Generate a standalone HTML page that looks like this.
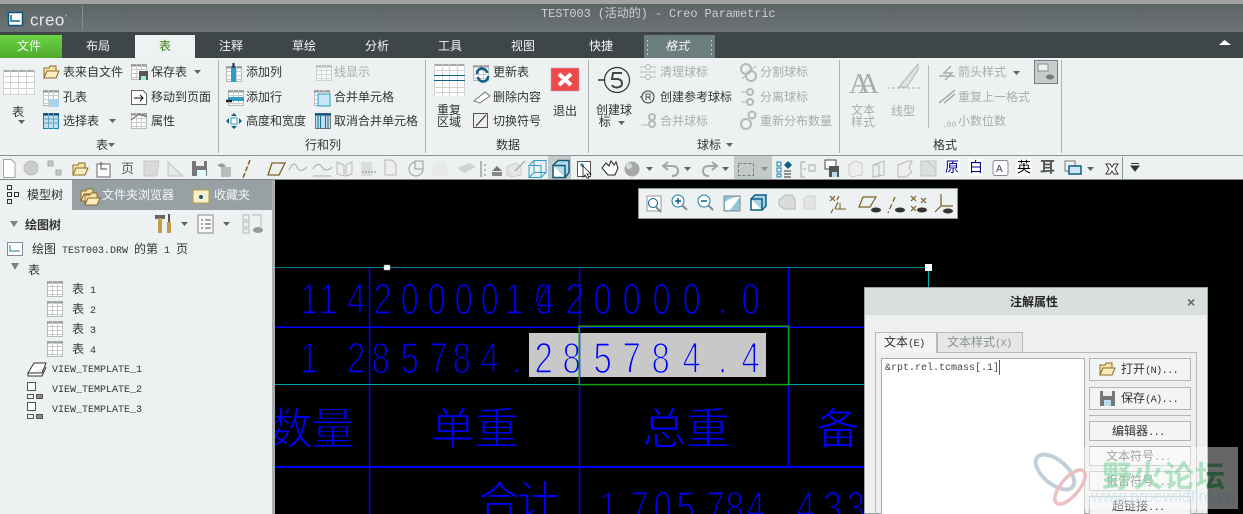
<!DOCTYPE html>
<html><head><meta charset="utf-8">
<style>
html,body{margin:0;padding:0;background:#000}
#p{position:relative;width:1243px;height:514px;overflow:hidden;background:#000;font:12px "Liberation Sans","WenQuanYi Zen Hei","Noto Sans CJK SC",sans-serif;color:#333}
#p div{position:absolute}
.t{position:absolute;white-space:nowrap;line-height:14px;font-family:"WenQuanYi Zen Hei","Noto Sans CJK SC",sans-serif;font-size:12px}
.g{color:#a9adae}
.w{color:#f4f6f6}
.m{font-family:"Liberation Mono","WenQuanYi Zen Hei",monospace}
.l{font:normal 10.5px "Liberation Mono",monospace;letter-spacing:-.8px}
.l2{font:normal 10px "Liberation Mono",monospace}
svg{position:absolute;left:0;top:0}
.btn{background:#f3f4f4;border:1px solid #b3b6b7;box-sizing:border-box}
</style></head><body><div id="p">

<!-- canvas -->
<svg width="1243" height="514" style="font-family:'Liberation Sans','WenQuanYi Zen Hei','Noto Sans CJK SC',sans-serif">
<rect x="529" y="333" width="237" height="44" fill="#c8c8c8"/>
<g transform="scale(.75 1)" font-size="44" fill="#0000ff" style="paint-order:fill stroke">
<text stroke="#000" stroke-width="1.600" y="314" x="400 425.300 462.700 498 534 570 606 640.700 673.300 712.700 714.700 754 791.300 830 870 910 957.300 988.700">1142000010420000.0</text>
<text stroke="#000" stroke-width="1.600" y="373" x="400 462.700 495.300 534 572.700 603.300 640.700 682.700">1285784.</text>
<text stroke="#c8c8c8" stroke-width="1.600" y="373" x="712.700 750 791.300 830 868.700 910 957.300 988.700">285784.4</text>
<text stroke="#000" stroke-width="1.600" y="522" x="798.700 840.700 871.300 902 942 967.300 995.300 1062 1098 1128.700">1705784433</text>
</g>
<g fill="#0000ff" font-size="44" stroke="#000" stroke-width="1.100" style="paint-order:fill stroke;font-family:'WenQuanYi Zen Hei','Noto Sans CJK SC',sans-serif">
<text x="268" y="444">数</text><text x="311" y="444">量</text><text x="431" y="444">单</text><text x="475" y="444">重</text><text x="642" y="444">总</text><text x="686" y="444">重</text><text x="816" y="444">备</text>
<text x="478" y="516" font-size="42">合</text><text x="517" y="516" font-size="42">计</text>
</g>
<g fill="#0000ff">
<rect x="275" y="326.500" width="590" height="1.500"/><rect x="275" y="466" width="590" height="2"/>
<rect x="368.800" y="268" width="1.500" height="246"/><rect x="578.800" y="268" width="1.500" height="246"/><rect x="787.800" y="268" width="1.500" height="198"/>
</g>
<rect x="275" y="267" width="654" height="1" fill="#00829a" shape-rendering="crispEdges"/><rect x="275" y="384" width="590" height="1" fill="#00a8b0" shape-rendering="crispEdges"/>
<rect x="928" y="268" width="1" height="19" fill="#00b0b0" shape-rendering="crispEdges"/>
<rect x="579.200" y="326.200" width="209.400" height="58.400" fill="none" stroke="#0aa50a" stroke-width="1.500"/>
<rect x="384" y="265" width="6" height="5" fill="#fff" stroke="#aaa" stroke-width=".5"/>
<rect x="925" y="264" width="7" height="7" fill="#fff"/>
</svg>

<div style="left:0;top:0;width:1243px;height:4px;background:#a2a2a0"></div>
<div style="left:0;top:4px;width:1243px;height:28px;background:linear-gradient(#5e6567,#6c7374)"></div>
<div style="left:0;top:32px;width:1243px;height:26px;background:#3e4648"></div>
<div style="left:0;top:35px;width:62px;height:23px;background:linear-gradient(#6bd544,#4fa92d)"></div>
<div style="left:135px;top:35px;width:60px;height:23px;background:#eef2f2"></div>
<div style="left:644px;top:35px;width:71px;height:23px;background:#6c7d7f"></div>
<div style="left:0;top:58px;width:1243px;height:97px;background:#edf1f2"></div>
<div style="left:0;top:155px;width:1243px;height:1px;background:#8d9495"></div>
<div style="left:0;top:156px;width:1243px;height:23px;background:#edf1f2"></div>
<div style="left:0;top:179px;width:1243px;height:1px;background:#7f8788"></div>
<div style="left:0;top:180px;width:272px;height:334px;background:#edf1f2"></div>
<div style="left:72px;top:180px;width:200px;height:30px;background:#97a1a3"></div>
<div style="left:272px;top:180px;width:3px;height:334px;background:#a9afb0"></div>
<div style="left:548px;top:156px;width:23px;height:23px;background:#c3c8c9"></div>
<div style="left:734px;top:156px;width:24px;height:23px;background:#c3c8c9"></div>
<div style="left:758px;top:156px;width:14px;height:23px;background:#c3c8c9"></div>
<div style="left:1034px;top:60px;width:24px;height:24px;background:#c7cbcc;border:1px solid #777e80;box-sizing:border-box"></div>
<div style="left:945px;top:159px;width:15px;height:17px;background:#fff"></div>
<div style="left:968px;top:159px;width:15px;height:17px;background:#fff"></div>
<div style="left:1016px;top:159px;width:16px;height:17px;background:#fff"></div>

<!-- floating toolbar -->
<div style="left:638px;top:188px;width:320px;height:31px;background:#edf1f2;border:1px solid #8d9697;box-sizing:border-box"></div>

<!-- dialog -->
<div style="left:864px;top:287px;width:344px;height:227px;background:#eeeff0;border:1px solid #9ea3a4;box-sizing:border-box"></div>
<div style="left:865px;top:288px;width:342px;height:27px;background:#d9dedf"></div>
<div style="left:875px;top:332px;width:62px;height:21px;background:#f2f3f3;border:1px solid #b7babb;border-bottom:0;box-sizing:border-box;z-index:1"></div>
<div style="left:937px;top:332px;width:86px;height:20px;background:#e4e6e7;border:1px solid #b7babb;border-bottom:0;box-sizing:border-box"></div>
<div style="left:875px;top:352px;width:322px;height:162px;border:1px solid #b7babb;border-bottom:0;box-sizing:border-box"></div>
<div style="left:881px;top:358px;width:204px;height:156px;background:#fff;border:1px solid #a8acad;border-bottom:0;box-sizing:border-box"></div>
<div class="btn" style="left:1089px;top:358px;width:102px;height:23px"></div>
<div class="btn" style="left:1089px;top:387px;width:102px;height:23px"></div>
<div style="left:1089px;top:415px;width:102px;height:1px;background:#b3b6b7"></div>
<div class="btn" style="left:1089px;top:421px;width:102px;height:20px"></div>
<div class="btn" style="left:1089px;top:446px;width:102px;height:20px"></div>
<div class="btn" style="left:1089px;top:471px;width:102px;height:20px"></div>
<div class="btn" style="left:1089px;top:496px;width:102px;height:20px"></div>
<div style="left:999px;top:360px;width:1px;height:15px;background:#2a66b0"></div>

<!-- tabs -->
<span class="t w" style="left:17px;top:39px">文件</span>
<span class="t w" style="left:86px;top:39px">布局</span>
<span class="t" style="left:159px;top:39px;color:#3a7d12">表</span>
<span class="t w" style="left:219px;top:39px">注释</span>
<span class="t w" style="left:292px;top:39px">草绘</span>
<span class="t w" style="left:365px;top:39px">分析</span>
<span class="t w" style="left:438px;top:39px">工具</span>
<span class="t w" style="left:511px;top:39px">视图</span>
<span class="t w" style="left:589px;top:39px">快捷</span>
<span class="t w" style="left:665px;top:39px;font-style:italic">格式</span>
<span class="t m" style="left:541px;top:7px;color:#ccd0d0;font-size:12px;letter-spacing:-.1px">TEST003 (活动的) - Creo Parametric</span>
<span class="t" style="left:30px;top:9px;color:#e6e9e9;font:17px/18px 'Liberation Sans',sans-serif;letter-spacing:.4px">creo<sup style="font-size:6px">°</sup></span>

<!-- ribbon text -->
<span class="t" style="left:63px;top:65px">表来自文件</span>
<span class="t" style="left:63px;top:90px">孔表</span>
<span class="t" style="left:63px;top:114px">选择表</span>
<span class="t" style="left:151px;top:65px">保存表</span>
<span class="t" style="left:151px;top:90px">移动到页面</span>
<span class="t" style="left:151px;top:114px">属性</span>
<span class="t" style="left:12px;top:105px">表</span>
<span class="t" style="left:96px;top:138px">表</span>
<span class="t" style="left:246px;top:65px">添加列</span>
<span class="t" style="left:246px;top:90px">添加行</span>
<span class="t" style="left:246px;top:114px">高度和宽度</span>
<span class="t g" style="left:334px;top:65px">线显示</span>
<span class="t" style="left:334px;top:90px">合并单元格</span>
<span class="t" style="left:334px;top:114px">取消合并单元格</span>
<span class="t" style="left:305px;top:138px">行和列</span>
<span class="t" style="left:437px;top:104px;line-height:12px;text-align:center">重复<br>区域</span>
<span class="t" style="left:493px;top:65px">更新表</span>
<span class="t" style="left:493px;top:90px">删除内容</span>
<span class="t" style="left:493px;top:114px">切换符号</span>
<span class="t" style="left:553px;top:104px">退出</span>
<span class="t" style="left:496px;top:138px">数据</span>
<span class="t" style="left:596px;top:104px;line-height:12px">创建球<br>&nbsp;标</span>
<span class="t g" style="left:660px;top:65px">清理球标</span>
<span class="t" style="left:660px;top:90px">创建参考球标</span>
<span class="t g" style="left:660px;top:114px">合并球标</span>
<span class="t g" style="left:760px;top:65px">分割球标</span>
<span class="t g" style="left:760px;top:90px">分离球标</span>
<span class="t g" style="left:760px;top:114px">重新分布数量</span>
<span class="t" style="left:697px;top:138px">球标</span>
<span class="t g" style="left:851px;top:104px;line-height:12px">文本<br>样式</span>
<span class="t g" style="left:891px;top:104px">线型</span>
<span class="t g" style="left:958px;top:65px">箭头样式</span>
<span class="t g" style="left:958px;top:90px">重复上一格式</span>
<span class="t g" style="left:958px;top:114px">小数位数</span>
<span class="t" style="left:933px;top:138px">格式</span>
<span class="t" style="left:945px;top:160px;color:#000090;font-size:14px">原</span>
<span class="t" style="left:969px;top:160px;color:#000090;font-size:14px">白</span>
<span class="t" style="left:1017px;top:160px;color:#000;font-size:14px">英</span>
<span class="t" style="left:1040px;top:160px;color:#555;font-weight:bold;font-size:15px">耳</span>

<!-- left panel text -->
<span class="t" style="left:27px;top:188px">模型树</span>
<span class="t w" style="left:102px;top:188px">文件夹浏览器</span>
<span class="t w" style="left:214px;top:188px">收藏夹</span>
<span class="t" style="left:25px;top:218px;font-weight:bold">绘图树</span>
<span class="t" style="left:32px;top:242px">绘图<b class="l2" style="white-space:pre"> TEST003.DRW </b>的第<b class="l2" style="white-space:pre"> 1 </b>页</span>
<span class="t" style="left:28px;top:263px">表</span>
<span class="t" style="left:72px;top:282px">表<b class="l2" style="white-space:pre"> 1</b></span>
<span class="t" style="left:72px;top:302px">表<b class="l2" style="white-space:pre"> 2</b></span>
<span class="t" style="left:72px;top:322px">表<b class="l2" style="white-space:pre"> 3</b></span>
<span class="t" style="left:72px;top:342px">表<b class="l2" style="white-space:pre"> 4</b></span>
<span class="t m" style="left:52px;top:364px;font-size:10px">VIEW_TEMPLATE_1</span>
<span class="t m" style="left:52px;top:384px;font-size:10px">VIEW_TEMPLATE_2</span>
<span class="t m" style="left:52px;top:404px;font-size:10px">VIEW_TEMPLATE_3</span>

<!-- dialog text -->
<span class="t" style="left:1010px;top:295px;font-weight:bold;color:#222">注解属性</span>
<span class="t" style="left:1187px;top:295px;font-weight:bold;color:#666;font-family:'Liberation Sans',sans-serif;font-size:14px">×</span>
<span class="t" style="left:884px;top:335px;z-index:2">文本<b class="l">(E)</b></span>
<span class="t" style="left:947px;top:335px;color:#8c9091">文本样式<b class="l">(X)</b></span>
<span class="t" style="left:885px;top:362px;font:10px/14px 'Liberation Mono',monospace;color:#444">&amp;rpt.rel.tcmass[.1]</span>
<span class="t" style="left:1121px;top:362px">打开<b class="l">(N)...</b></span>
<span class="t" style="left:1121px;top:391px">保存<b class="l">(A)...</b></span>
<span class="t" style="left:1112px;top:424px">编辑器<b class="l">...</b></span>
<span class="t" style="left:1106px;top:449px;color:#666">文本符号<b class="l">...</b></span>
<span class="t" style="left:1106px;top:474px;color:#666">报告符号<b class="l">...</b></span>
<span class="t" style="left:1112px;top:499px">超链接<b class="l">...</b></span>

<!-- icons -->
<svg width="1243" height="514" fill="none">
<defs>
<g id="tb"><rect x=".5" y=".5" width="15" height="15" fill="#fff" stroke="#b5b9ba"/><path d="M0 1.5H16" stroke="#999" stroke-width="2"/><path d="M.5 5.5H16M.5 9.5H16M.5 13.5H16M5.5 0V16M10.5 0V16" stroke="#c7cacb"/></g>
<g id="dr"><path d="M0 0H7L3.500 4Z" fill="#5f6566"/></g>
<g id="fl"><path d="M1 4H6L7 2H13V14H1Z" fill="#f5e0a5" stroke="#8a6d2e"/><path d="M1 14L4 7H16L13 14Z" fill="#fbecbd" stroke="#8a6d2e"/></g>
<g id="vw"><rect x=".5" y=".5" width="8" height="8" fill="#fff" stroke="#555"/><rect x=".5" y="12.500" width="6" height="4" fill="#eee" stroke="#555"/><rect x="9.500" y="12.500" width="6" height="4" fill="#888" stroke="#555"/></g>
</defs>
<!-- logo -->
<rect x="8.500" y="12.500" width="14" height="13" fill="#fff" stroke="#0f5578" stroke-width="1.500"/><path d="M11 15V21H20" stroke="#0f6b94" stroke-width="1.500"/>
<path d="M82.500 6V30" stroke="#858c8d"/>
<!-- tab dots -->
<path d="M647.500 40V55M711.500 40V55" stroke="#dfe5e5" stroke-dasharray="1.500 3"/>
<path d="M1219 45L1224.500 40L1231 45Z" fill="#fff"/>
<!-- separators -->
<path d="M218.500 60V153M425.500 60V153M588.500 60V153M839.500 60V153M1061.500 60V153" stroke="#aeb3b4"/>
<path d="M928.500 65V128" stroke="#b7bbbc"/>
<!-- big table -->
<g shape-rendering="crispEdges"><rect x="3" y="70" width="32" height="25" fill="#fff"/><path d="M3 71H35" stroke="#aaa" stroke-width="2"/><path d="M3 76.500H35M3 82.500H35M3 88.500H35M3 94.500H35M3.500 70V95M10.500 70V95M18.500 70V95M26.500 70V95M34.500 70V95" stroke="#d0d3d4"/>
<rect x="434" y="64" width="31" height="32" fill="#fff"/><path d="M434 65H465" stroke="#aaa" stroke-width="2"/><path d="M434 70.500H465M434 87.500H465M434 92.500H465M434.500 64V96M442.500 64V96M449.500 64V96M457.500 64V96M464.500 64V96" stroke="#d0d3d4"/><path d="M434 75.500H465M434 80.500H465" stroke="#0f6285"/></g>
<use href="#dr" x="18" y="120"/><use href="#dr" x="109" y="119"/><use href="#dr" x="108" y="143"/><use href="#dr" x="194" y="70"/>
<use href="#fl" transform="translate(43,64)"/>
<use href="#tb" transform="translate(43,90)"/><rect x="49" y="99" width="10" height="8" fill="#a8d5ea"/>
<g transform="translate(43,113)"><rect x=".5" y=".5" width="15" height="15" fill="#bfe0ec" stroke="#1a7fa6"/><path d="M0 1.500H16" stroke="#147" stroke-width="2"/><path d="M.5 6H16M.5 10H16M5.500 0V16M10.500 0V16" stroke="#5fa5c0"/></g>
<use href="#tb" transform="translate(131,64)"/><rect x="139" y="71" width="9" height="9" fill="#555"/><rect x="141" y="76" width="5" height="4" fill="#9ed"/>
<g transform="translate(131,90)"><path d="M.5 .5H12L15.500 4V14.500H.5Z" fill="#fff" stroke="#666"/><path d="M3 8H12M9 5L12 8L9 11" stroke="#111"/></g>
<use href="#tb" transform="translate(131,113)"/><path d="M131 120L139 114L147 117" stroke="#666"/>
<use href="#tb" transform="translate(226,66)"/><rect x="231" y="66" width="5" height="16" fill="#2d9cc6"/><path d="M233.500 63V68" stroke="#222" stroke-width="2"/>
<use href="#tb" transform="translate(228,90)"/><rect x="228" y="97" width="16" height="4" fill="#2d9cc6"/><path d="M226 101H232" stroke="#222" stroke-width="2.500"/>
<g transform="translate(226,113)"><rect x="5" y="5" width="6" height="6" fill="#fff" stroke="#2d9cc6"/><path d="M8 0L5 3H11ZM8 16L5 13H11ZM0 8L3 5V11ZM16 8L13 5V11Z" fill="#1b5e79"/></g>
<g transform="translate(316,65)"><use href="#tb" opacity=".6"/></g>
<use href="#tb" transform="translate(314,90)"/><rect x="318" y="94" width="12" height="12" fill="#c6e8f5" stroke="#2d9cc6"/>
<g transform="translate(315,113)"><rect x=".5" y=".5" width="15" height="15" fill="#bfe0ec" stroke="#777"/><path d="M0 1.500H16" stroke="#147" stroke-width="2"/><path d="M5.500 0V16M10.500 0V16M3 0V16M13 0V16" stroke="#1a6d90"/></g>
<use href="#tb" transform="translate(473,65)"/><path d="M477 74A5 5 0 0 1 487 73M488 76A5 5 0 0 1 478 77" stroke="#0d5f85" stroke-width="2.500"/>
<path d="M474 101L485 92L490 96L480 103Z" fill="#fff" stroke="#777"/>
<g transform="translate(473,113)"><rect x=".5" y=".5" width="14" height="14" fill="#eee" stroke="#555"/><path d="M3 13L13 2" stroke="#222"/></g>
<rect x="551" y="68" width="28" height="23" fill="#ee4a4a" stroke="#b9c" stroke-width=".5"/><path d="M559 74L571 85M571 74L559 85" stroke="#fff" stroke-width="4"/>
<circle cx="617" cy="80" r="12.500" stroke="#333" stroke-width="1.200"/><path d="M598 80H604" stroke="#333" stroke-width="1.500"/><path d="M622 73H613L612 79H618Q622 80 622 83.500T617 87.500Q613 87.500 612 85" stroke="#444" stroke-width="2"/>
<use href="#dr" x="618" y="121"/><use href="#dr" x="726" y="143"/>
<g stroke="#b4b8b9"><path d="M640 67H656M640 72H656M640 77H656"/><circle cx="648" cy="67" r="2.500" fill="#edf1f2"/><circle cx="648" cy="77" r="2.500" fill="#edf1f2"/>
<circle cx="746" cy="69" r="5" stroke-width="2"/><circle cx="751" cy="76" r="5" stroke-width="2"/><path d="M742 79L756 66"/>
<circle cx="750" cy="92" r="3" stroke-width="2"/><circle cx="750" cy="102" r="3" stroke-width="2"/><path d="M741 92H746M741 102H746"/>
<circle cx="652" cy="117" r="3" stroke-width="2"/><circle cx="652" cy="124" r="3" stroke-width="2"/><path d="M641 125H648"/>
<circle cx="746" cy="124" r="5" stroke-width="2"/><circle cx="752" cy="115" r="3.500" stroke-width="2"/></g>
<circle cx="648" cy="97" r="6" stroke="#333"/><path d="M640 97H642" stroke="#333"/><path d="M646 100V94H650V97H646M648 97L651 100" stroke="#333" stroke-width=".8"/>
<text x="849" y="93" font-family="Liberation Serif" font-size="29" fill="#a9adae">A</text><text x="858" y="93" font-family="Liberation Serif" font-size="29" fill="#a9adae">A</text>
<path d="M899 87L918 64V70L907 87Z" fill="#dfe3e4" stroke="#b1b5b6"/><path d="M887 88H920" stroke="#b1b5b6" stroke-dasharray="3 2"/>
<g stroke="#a9adae"><path d="M939 76H955M951 66L944 73H952L945 80" stroke-width="1.500"/><path d="M939 103L955 90M944 103L955 94" stroke-width="1.500"/></g>
<text x="942" y="127" fill="#a9adae" font-size="8" font-family="Liberation Mono">.00</text>
<use href="#dr" x="1013" y="71"/>
<rect x="1038" y="64" width="10" height="7" fill="#edf1f2" stroke="#888"/><ellipse cx="1050" cy="77" rx="4" ry="2.500" fill="#777"/>
<!-- toolbar -->
<g transform="translate(0,157)">
<path d="M3.500 2.500H11L15 6V20.500H3.500Z" fill="#fff" stroke="#9aa"/>
<circle cx="31" cy="11" r="7" fill="#ccc" stroke="#bbb"/>
<path d="M48 4h5v5h-5zM56 13h5v5h-5z" fill="#c7c7c7" stroke="#aaa"/>
<use href="#fl" transform="translate(72,4)"/>
<rect x="97" y="7" width="13" height="13" fill="#fff" stroke="#666"/><path d="M101 5V12H107" stroke="#444"/>
<text x="121" y="16" font-size="13" fill="#555" font-family="WenQuanYi Zen Hei">页</text>
<path d="M144 4H159L157 19H144Z" fill="#d7d9da" stroke="#c6c8c9"/>
<path d="M168 19V5L183 19Z" fill="#e6e8e8" stroke="#c2c4c5"/>
<rect x="192" y="4" width="15" height="15" fill="#777"/><rect x="197" y="13" width="9" height="7" fill="#dff"/><rect x="196" y="4" width="8" height="5" fill="#eee"/>
<path d="M217 8L222 6L226 9L222 11Z" fill="#999"/><rect x="221" y="10" width="10" height="10" fill="#b9bcbd"/>
<path d="M250 3L243 21" stroke="#7c5f25" stroke-width="1.500" stroke-dasharray="5 2"/>
<path d="M268 18L272 6H285L279 18Z" stroke="#7c5f25" stroke-width="1.300"/>
<path d="M289 13Q294 3 297 10T307 10" stroke="#b5b9ba" stroke-width="1.300"/>
<path d="M313 12Q318 4 322 10T332 10M313 19H331" stroke="#b5b9ba" stroke-width="1.300"/>
<path d="M337 5L344 8V19L337 17ZM352 5L346 8V19L352 17Z" stroke="#b5b9ba" fill="#eee"/>
<rect x="361" y="5" width="11" height="14" fill="#ddd"/><path d="M362 15H376" stroke="#888" stroke-dasharray="2 1"/>
<path d="M385 3H392L396 7V18H385Z" fill="#eee" stroke="#b5b9ba"/>
<circle cx="416" cy="12" r="7" stroke="#999"/><rect x="415" y="4" width="8" height="8" fill="#edf1f2" stroke="#999"/>
<path d="M432 19V8L443 3L448 10V19Z" fill="#e7e9ea"/>
<path d="M457 11L470 6L476 10L464 16Z" fill="#d0d2d3"/>
<path d="M481 4V20M484 8H486M484 13H486M484 18H486" stroke="#777"/><path d="M492 14L497 9L502 14Z" fill="#777"/><rect x="492" y="15" width="10" height="4" fill="#888"/>
<path d="M507 10L515 6L521 9V18L513 20L507 18Z" fill="#e3e5e6" stroke="#ccc"/><path d="M515 14L525 4" stroke="#aaa" stroke-width="1.500"/>
<path d="M529 8.500H541V20.500H529ZM529 8.500L534 3.500H546V15.500L541 20.500M534 3.500V15.500H546M534 15.500L529 20.500" stroke="#2f9fc6"/>
<path d="M553 8.500H565V20.500H553Z" fill="#fff" stroke="#0e5c7f" stroke-width="1.500"/><path d="M553 8.500L558 3.500H569V15.500L565 20.500" fill="#b6d9e6" stroke="#0e5c7f" stroke-width="1.500"/><path d="M553 8.500H565V20.500" stroke="#0e5c7f" stroke-width="1.500"/>
<rect x="577.500" y="4.500" width="13" height="15" fill="#fff" stroke="#555"/><path d="M580 8H584M582 6V10" stroke="#0a6a90"/><path d="M583 9L591 17L587 17L589 21L587 21L585 18L583 20Z" fill="#fff" stroke="#222" stroke-width=".8"/>
<path d="M602 11L606 6L609 9L611 4L614 8L616 5L618 11L615 18H608Z" fill="#fff" stroke="#222"/>
<circle cx="632" cy="12" r="7.500" fill="#a5a7a8"/><circle cx="629" cy="9" r="3" fill="#d8d9da"/>
<use href="#dr" x="646" y="10"/><use href="#dr" x="684" y="10"/><use href="#dr" x="722" y="10"/><use href="#dr" x="761" y="10" opacity=".6"/>
<path d="M665 9H672Q678 9 678 14T672 19M668 5L663 9L668 13" stroke="#a2a6a7" stroke-width="2"/>
<path d="M716 9H709Q703 9 703 14T709 19M712 5L717 9L712 13" stroke="#a2a6a7" stroke-width="2"/>
<rect x="738.500" y="6.500" width="15" height="12" stroke="#777" stroke-dasharray="3 2"/>
<path d="M777 5h4v4h-4zM777 11h4v4h-4zM777 17h4v3h-4z" stroke="#1a7fa6"/><path d="M784 14H791M784 17H791M784 20H791" stroke="#333"/><path d="M784 8L788 4V12ZM792 8L788 4V12Z" fill="#0d5f85"/>
<path d="M801 5H805M801 5V20H805M803 12H806" stroke="#a2a6a7"/><rect x="809" y="8" width="6" height="6" stroke="#aaa"/>
<rect x="825" y="3" width="11" height="9" fill="#fff" stroke="#444"/><rect x="829" y="9" width="10" height="11" fill="#555"/><rect x="832" y="15" width="5" height="5" fill="#bde"/>
<path d="M849 8L855 4L862 6V18L851 20L849 17Z" fill="#eee" stroke="#c9cccc"/>
<path d="M873 8L884 4V18L873 20ZM873 8L879 8V20M884 4" fill="#eee" stroke="#b5b9ba"/>
<path d="M898 8L908 4H912L909 11L912 15L906 20H898Z" fill="#eee" stroke="#b5b9ba"/>
<path d="M921 4H936V19H921ZM927 4L936 13" fill="#dcdedf" stroke="#c2c4c5"/>
<rect x="993" y="3.500" width="15" height="15" rx="2" fill="#fff" stroke="#889"/><text x="996" y="15" font-size="10" fill="#345" font-family="Liberation Sans">A</text>
<rect x="1065" y="4" width="10" height="10" stroke="#777"/><rect x="1069" y="9" width="12" height="8" fill="#cfe9f3" stroke="#0d5f85" stroke-width="1.500"/>
<use href="#dr" x="1087" y="10"/>
<path d="M1106 7L1110 7L1112 10L1114 7L1118 7L1115 12L1118 17H1114L1112 14L1110 17H1106L1109 12Z" fill="#fff" stroke="#333"/>
<path d="M1122.500 0V22" stroke="#8d9495"/>
<path d="M1131 9H1139L1135 14ZM1131 6.500H1139" fill="#333" stroke="#333"/>
</g>
<!-- float toolbar icons -->
<g transform="translate(638,188)">
<rect x="9" y="8" width="14" height="15" fill="#fff" stroke="#999"/><circle cx="15" cy="15" r="4.500" stroke="#0d5f85"/><path d="M18 19L23 24" stroke="#888" stroke-width="2"/>
<circle cx="40" cy="13" r="6" fill="#fff" stroke="#0d7fa6"/><path d="M37 13H43M40 10V16" stroke="#0d5f85" stroke-width="1.500"/><path d="M44 17L49 22" stroke="#888" stroke-width="2"/>
<circle cx="66" cy="13" r="6" fill="#fff" stroke="#0d7fa6"/><path d="M63 13H69" stroke="#0d5f85" stroke-width="1.500"/><path d="M70 17L75 22" stroke="#888" stroke-width="2"/>
<rect x="86" y="8" width="16" height="15" fill="#8fc6da" stroke="#888"/><path d="M87 22V14Q95 8 102 9L92 22Z" fill="#fff"/>
<path d="M113 11H124V22H113Z" fill="#fff" stroke="#0d5f85" stroke-width="1.500"/><path d="M113 11L117 7H128V18L124 22" fill="#a5d2e3" stroke="#0d5f85" stroke-width="1.500"/><path d="M113 11H124V22" stroke="#0d5f85" stroke-width="1.500"/>
<path d="M141 12L147 7H154L157 12V21H146L141 17Z" fill="#dadcdc" stroke="#b5b9ba"/>
<path d="M166 11L169 8H177V21H166Z" fill="#e2e4e5" stroke="#cfd1d2"/>
<g stroke="#7c5f25"><path d="M192 8L197 13M197 8L192 13M201 8L199 12M200 14L197 21M195 21L193 25" stroke-width="1.200"/><path d="M202 21V15M198 21H208"/></g>
<path d="M221 19L225 9H238L232 19Z" stroke="#7c5f25" stroke-width="1.200"/><ellipse cx="238" cy="22" rx="5" ry="2.500" fill="#333"/>
<path d="M257 9L250 25" stroke="#7c5f25" stroke-width="1.300" stroke-dasharray="5 3"/><ellipse cx="262" cy="22" rx="5" ry="2.500" fill="#333"/>
<path d="M273 8L278 13M278 8L273 13M283 10L288 15M288 10L283 15M273 18L278 23M278 18L273 23" stroke="#7c5f25" stroke-width="1.200"/><ellipse cx="284" cy="22" rx="5" ry="2.500" fill="#333"/>
<path d="M303 6V18H315M303 18L297 24" stroke="#7c5f25" stroke-width="1.200"/><ellipse cx="310" cy="23" rx="5" ry="2.500" fill="#333"/>
</g>
<!-- left panel icons -->
<path d="M7.500 185.500h4v4h-4zM7.500 192.500h4v4h-4zM7.500 199.500h4v4h-4zM14.500 192.500h4v4h-4z" stroke="#333"/>
<use href="#fl" transform="translate(80,187)"/><use href="#fl" transform="translate(84,191)"/>
<rect x="193" y="190" width="16" height="13" fill="#f8eec8" stroke="#b69a50"/><circle cx="201" cy="197" r="2" fill="#0d5f85"/>
<path d="M10 221H18L14 227Z" fill="#7b8284"/><path d="M11 263H19L15 270Z" fill="#7b8284"/>
<path d="M155 215H165V219H155Z" fill="#666"/><rect x="158" y="218" width="4" height="15" fill="#c49a4d"/><rect x="168" y="214" width="2" height="9" fill="#555"/><rect x="167" y="222" width="4" height="11" fill="#c49a4d"/>
<use href="#dr" x="181" y="222"/><use href="#dr" x="223" y="222"/>
<rect x="198" y="215" width="15" height="18" fill="#f9f9f9" stroke="#888"/><path d="M205 220H211M205 224H211M205 228H211M201 220H203M201 224H203M201 228H203" stroke="#555"/>
<path d="M243 215h6v5h-6zM243 222h6v5h-6zM243 229h6v4h-6zM252 215h9v12" stroke="#b5b9ba"/><ellipse cx="258" cy="230" rx="5" ry="3" fill="#999"/>
<rect x="7.500" y="242.500" width="15" height="13" fill="#fff" stroke="#889"/><path d="M10 245V251H20" stroke="#1a7fa6"/>
<use href="#tb" transform="translate(47,281)"/><use href="#tb" transform="translate(47,301)"/><use href="#tb" transform="translate(47,321)"/><use href="#tb" transform="translate(47,341)"/>
<path d="M28 373L34 363H46L42 373Z M28 373V376H42L46 367" fill="#fff" stroke="#333"/>
<use href="#vw" transform="translate(27,382)"/><use href="#vw" transform="translate(27,402)"/>
<!-- dialog icons -->
<use href="#fl" transform="translate(1099,361)"/>
<rect x="1100" y="391" width="15" height="15" fill="#777"/><rect x="1103" y="391" width="9" height="5" fill="#eee"/><rect x="1104" y="400" width="7" height="6" fill="#bde"/>
</svg>

<!-- watermark -->
<div style="left:1083px;top:447px;width:155px;height:62px;background:rgba(255,255,255,.4)"></div>
<svg width="1243" height="514" fill="none">
<defs>
<linearGradient id="wm" gradientUnits="userSpaceOnUse" x1="1100" y1="0" x2="1240" y2="0"><stop offset="0" stop-color="#7fd6a0"/><stop offset=".76" stop-color="#7fd6a0"/><stop offset=".77" stop-color="#004a1a"/><stop offset="1" stop-color="#004a1a"/></linearGradient>
<linearGradient id="wu" gradientUnits="userSpaceOnUse" x1="1090" y1="0" x2="1240" y2="0"><stop offset="0" stop-color="#c8e4ec"/><stop offset=".78" stop-color="#c8e4ec"/><stop offset=".79" stop-color="#3f6770"/><stop offset="1" stop-color="#3f6770"/></linearGradient>
</defs>
<ellipse cx="1055" cy="472" rx="23" ry="12" transform="rotate(40 1055 472)" stroke="#c3cfd7" stroke-width="4"/>
<ellipse cx="1070" cy="487" rx="21" ry="9" transform="rotate(-50 1070 487)" stroke="#eac0c0" stroke-width="3.500"/>
<text x="1102" y="487" font-family="WenQuanYi Zen Hei,Noto Sans CJK SC" font-size="30" font-weight="bold" fill="url(#wm)" fill-opacity=".6" letter-spacing="1">野火论坛</text>
<text x="1091" y="502" font-family="Liberation Sans" font-size="16.300" fill="url(#wu)" fill-opacity=".75">www.proewildfire.cn</text>
</svg>
</div></body></html>
